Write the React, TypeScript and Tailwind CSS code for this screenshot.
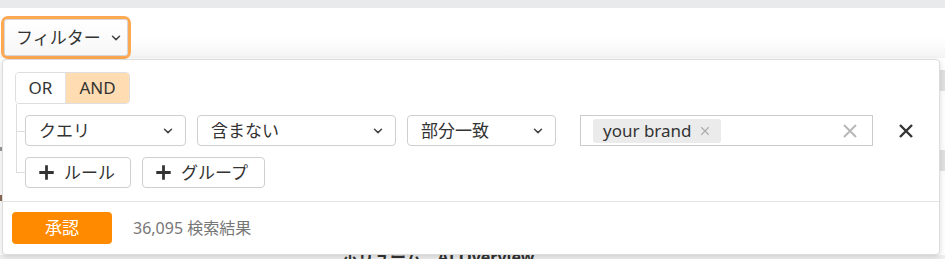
import React from "react";

const Chevron = ({ className = "" }: { className?: string }) => (
  <svg className={className} width="10" height="6" viewBox="0 0 10 6" fill="none">
    <path d="M1.5 1.2 L5 4.6 L8.5 1.2" stroke="#444" strokeWidth="1.5" strokeLinecap="round" strokeLinejoin="round" />
  </svg>
);

const Plus = () => (
  <svg width="17" height="17" viewBox="0 0 16 16" fill="none">
    <path d="M8 1.2 V14.8 M1.2 8 H14.8" stroke="#333" strokeWidth="2.6" />
  </svg>
);

const Cross = ({ size, color, w }: { size: number; color: string; w: number }) => (
  <svg width={size} height={size} viewBox="0 0 16 16" fill="none">
    <path d="M2 2 L14 14 M14 2 L2 14" stroke={color} strokeWidth={w} />
  </svg>
);

const Select = ({ label, w }: { label: string; w: string }) => (
  <div className={`${w} h-[31px] border border-[#cfcfcf] rounded-[4px] bg-white flex items-center justify-between pl-[13px] pr-[12px] text-[17px] text-[#333]`}>
    <span>{label}</span>
    <Chevron />
  </div>
);

export default function App() {
  return (
    <div
      className="relative w-[945px] h-[259px] overflow-hidden bg-white text-[#333]"
      style={{ fontFamily: '"Noto Sans", "Noto Sans CJK JP", sans-serif' }}
    >
      <div className="h-[8px] bg-[#e9eaec]" />
      <div className="h-[50px] bg-gradient-to-b from-white from-60% to-[#f4f4f4] pt-[8px] pl-[1px]">
        <div className="inline-flex rounded-[7px] border-[3px] border-[#ffa852] p-0">
          <div className="w-[124px] h-[37px] bg-gradient-to-b from-white to-[#f7f7f7] border border-[#d6d6d6] rounded-[3px] flex items-center pl-[11px] text-[17px] text-[#333]">
            <span>フィルター</span>
            <Chevron className="ml-[10px]" />
          </div>
        </div>
      </div>

      {/* background content behind popup */}
      <div className="absolute right-0 top-[70px] w-[6px] h-[21px] bg-[#e2e2e2]" />
      <div className="absolute right-0 top-[150px] w-[6px] h-[21px] bg-[#e2e2e2]" />
      <div className="absolute left-0 top-[147px] w-[3px] h-[4px] bg-[#9a9a9a]" />
      <div className="absolute left-0 top-[195px] w-[3px] h-[6px] bg-[#8a6a55]" />
      <div className="absolute left-0 right-0 top-[255px] h-[4px] bg-[#f0f0f0]" />
      <div className="absolute left-[342px] top-[246px] text-[16px] leading-[22px] font-bold text-[#333] whitespace-nowrap">
        ボリューム<span className="ml-[16px]">AI Overview</span>
      </div>

      {/* popup */}
      <div className="absolute left-[2px] top-[59px] w-[938px] h-[196px] bg-white border border-[#dcdcdc] rounded-[4px] shadow-[0_2px_6px_rgba(0,0,0,0.15)]">
        <div className="relative pt-[12px] pl-[12px]">
          <div className="inline-flex h-[32px] text-[17px] rounded-[4px] overflow-hidden border border-[#dedede]">
            <div className="w-[50px] flex items-center justify-center bg-white text-[#333] border-r border-[#e4e4e4]">OR</div>
            <div className="w-[63px] flex items-center justify-center bg-[#ffdcb2] text-[#333]">AND</div>
          </div>

          {/* tree lines */}
          <div className="absolute left-[13px] top-[44px] w-[1px] h-[69px] bg-[#dddddd]" />
          <div className="absolute left-[13px] top-[71px] w-[10px] h-[1px] bg-[#dddddd]" />
          <div className="absolute left-[13px] top-[112px] w-[10px] h-[1px] bg-[#dddddd]" />

          <div className="flex items-center mt-[11px] pl-[10px]">
            <Select label="クエリ" w="w-[161px]" />
            <div className="w-[11px]" />
            <Select label="含まない" w="w-[199px]" />
            <div className="w-[11px]" />
            <Select label="部分一致" w="w-[149px]" />
            <div className="w-[24px]" />
            <div className="w-[293px] h-[31px] border border-[#cccccc] bg-white flex items-center pl-[12px] pr-[14px]">
              <div className="h-[24px] rounded-[3px] bg-[#ebebeb] flex items-center pl-[10px] pr-[11px] text-[17px] text-[#333]">
                your brand
                <span className="ml-[8px] mt-[1px]"><Cross size={10} color="#aaaaaa" w={1.8} /></span>
              </div>
              <div className="flex-1" />
              <Cross size={16} color="#b8b8b8" w={2} />
            </div>
            <div className="ml-[25px] mt-[1px]">
              <Cross size={16} color="#333333" w={2.4} />
            </div>
          </div>

          <div className="flex mt-[11px] pl-[10px] gap-[11px]">
            <div className="w-[106px] h-[31px] border border-[#cfcfcf] rounded-[4px] flex items-center pl-[12px] text-[17px] text-[#333]">
              <Plus />
              <span className="ml-[9px]">ルール</span>
            </div>
            <div className="w-[123px] h-[31px] border border-[#cfcfcf] rounded-[4px] flex items-center pl-[12px] text-[17px] text-[#333]">
              <Plus />
              <span className="ml-[9px]">グループ</span>
            </div>
          </div>
        </div>

        <div className="mt-[13px] h-[1px] bg-[#e4e4e4]" />

        <div className="flex items-center pl-[9px] pt-[10px]">
          <div className="w-[100px] h-[32px] rounded-[4px] bg-[#ff8a00] text-white text-[17px] flex items-center justify-center">承認</div>
          <div className="ml-[21px] text-[16px] text-[#777]">36,095 検索結果</div>
        </div>
      </div>
    </div>
  );
}
